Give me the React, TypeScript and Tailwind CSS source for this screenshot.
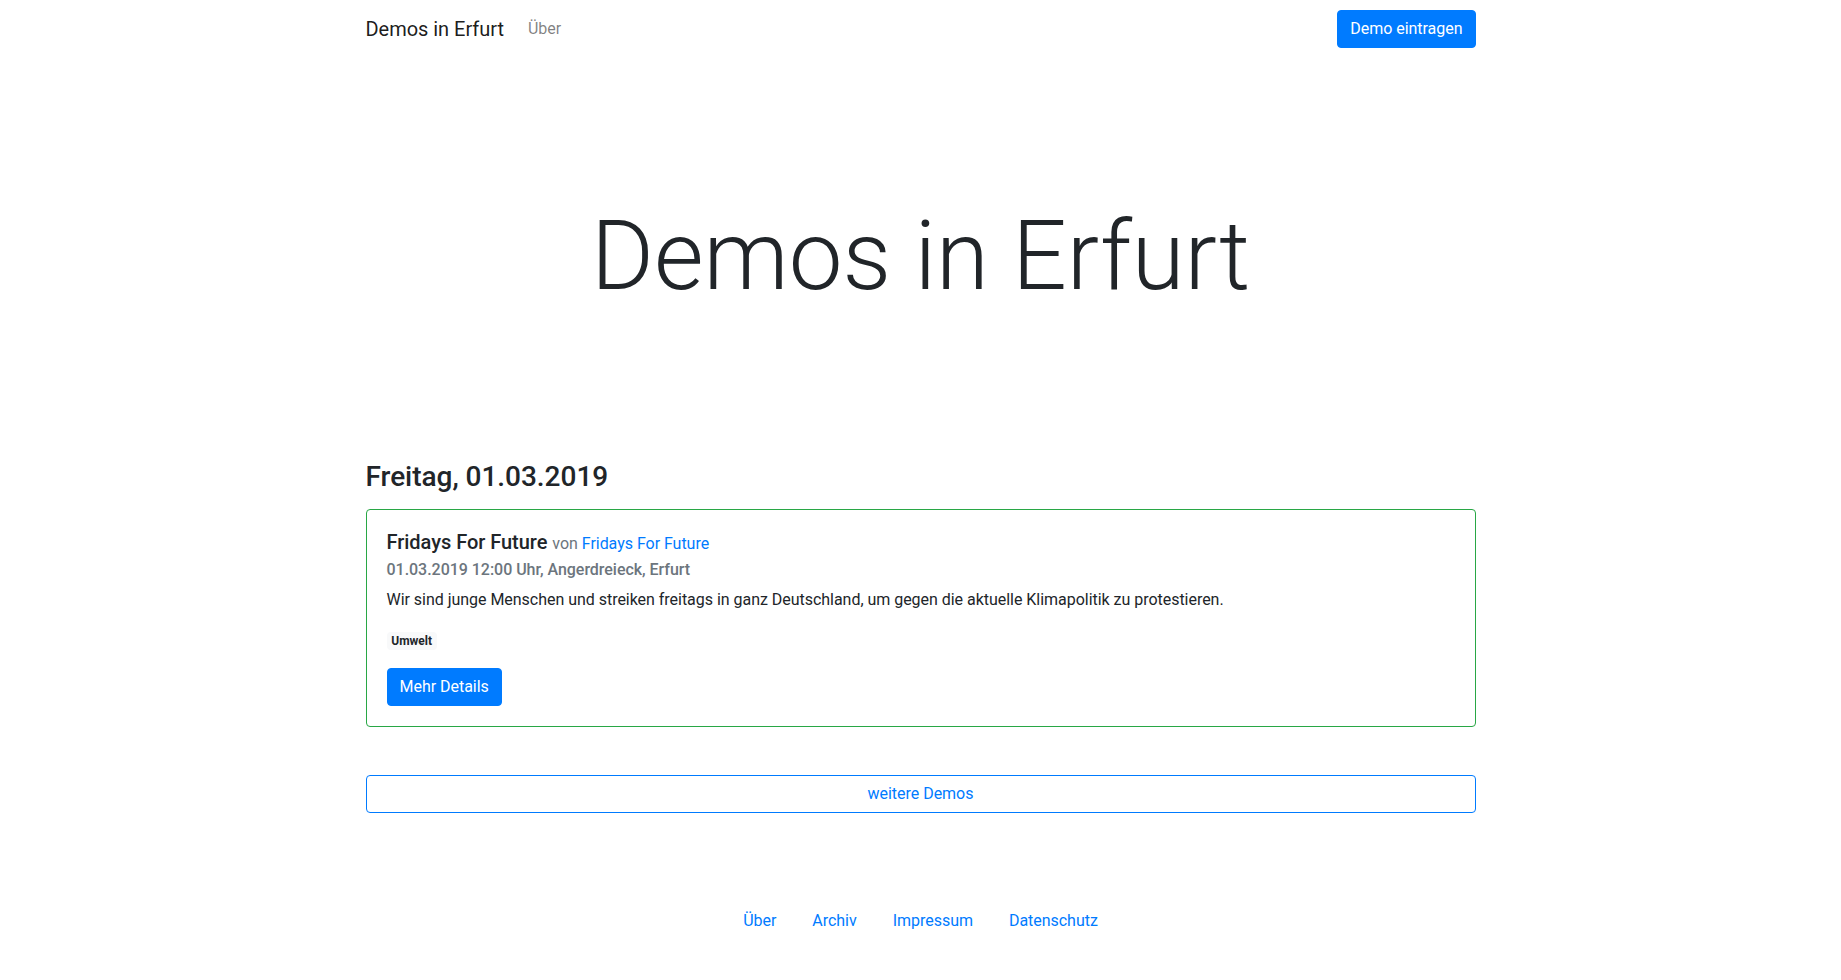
import React from "react";

export default function App() {
  return (
    <div className="min-h-[980px] bg-white text-[#212529] text-[16px] leading-[1.5] tracking-[-0.03px]" style={{ fontFamily: "Roboto, 'Liberation Sans', sans-serif" }}>
      <nav className="h-14 pt-px">
        <div className="mx-auto max-w-[1140px] px-[15px] h-full flex items-center justify-between">
          <div className="flex items-center">
            <a className="text-[20px] leading-[30px] py-[5px] mr-4 text-[rgba(0,0,0,0.9)]" href="#">Demos in Erfurt</a>
            <a className="text-[16px] leading-6 px-2 py-2 text-[rgba(0,0,0,0.5)]" href="#">Über</a>
          </div>
          <a href="#" className="bg-[#007bff] text-white border border-[#007bff] rounded-[4px] px-3 py-[6px] text-[16px] leading-6">Demo eintragen</a>
        </div>
      </nav>

      <div className="mx-auto max-w-[1140px] px-[15px]">
        <h1 className="pt-[143px] text-center text-[96px] leading-[1.2] font-light tracking-normal">Demos in Erfurt</h1>

        <h3 className="mt-[146px] mb-[15px] text-[28px] leading-[1.2] font-medium">Freitag, 01.03.2019</h3>

        <div className="border border-[#28a745] rounded-[4px] p-5">
          <h5 className="text-[20px] leading-[1.2] font-medium mb-3">
            Fridays For Future{" "}
            <small className="text-[16px] font-normal text-[#6c757d]">
              von <a href="#" className="text-[#007bff]">Fridays For Future</a>
            </small>
          </h5>
          <h6 className="-mt-[6px] mb-[9px] text-[16px] leading-[1.2] font-medium text-[#6c757d]">01.03.2019 12:00 Uhr, Angerdreieck, Erfurt</h6>
          <p className="mb-4 leading-6">Wir sind junge Menschen und streiken freitags in ganz Deutschland, um gegen die aktuelle Klimapolitik zu protestieren.</p>
          <div className="h-6 mb-4 flex items-center pt-[2px]">
            <span className="inline-block bg-[#f8f9fa] text-[#212529] text-[12px] leading-none font-bold px-[4.8px] py-[3px] rounded-[4px]">Umwelt</span>
          </div>
          <a href="#" className="inline-block bg-[#007bff] text-white border border-[#007bff] rounded-[4px] px-3 py-[6px] text-[16px] leading-6">Mehr Details</a>
        </div>

        <a href="#" className="mt-12 block w-full text-center border border-[#007bff] text-[#007bff] rounded-[4px] px-3 py-[6px] text-[16px] leading-6">weitere Demos</a>

        <div className="mt-[88px] flex justify-center gap-[36px] pb-8">
          <a href="#" className="py-2 text-[#007bff] leading-6">Über</a>
          <a href="#" className="py-2 text-[#007bff] leading-6">Archiv</a>
          <a href="#" className="py-2 text-[#007bff] leading-6">Impressum</a>
          <a href="#" className="py-2 text-[#007bff] leading-6">Datenschutz</a>
        </div>
      </div>
    </div>
  );
}
